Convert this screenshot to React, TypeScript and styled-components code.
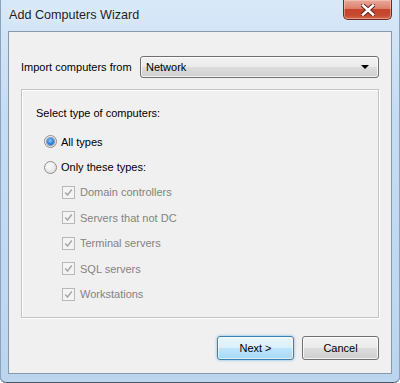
import React from "react";
import styled, { createGlobalStyle, css } from "styled-components";

const GlobalStyle = createGlobalStyle`
  html, body {
    margin: 0;
    padding: 0;
    width: 400px;
    height: 383px;
    overflow: hidden;
    background: #ffffff;
  }
  * {
    box-sizing: border-box;
  }
`;

const uiFont = `"Liberation Sans", Arial, sans-serif`;

const Window = styled.div`
  width: 400px;
  height: 383px;
  display: flex;
  flex-direction: column;
  padding: 0 8px 9px 8px;
  background: linear-gradient(180deg, #d7e8f8 0%, #c6dcf2 30%, #bcd5ee 100%);
  box-shadow: inset 1px 0 0 #8aa4bf, inset -1px 0 0 #8aa4bf, inset 0 -1px 0 #4a5868;
  border-bottom-left-radius: 6px;
  border-bottom-right-radius: 6px;
  font-family: ${uiFont};
  font-size: 11px;
`;

const TitleBar = styled.div`
  height: 31px;
  flex-shrink: 0;
  display: flex;
  align-items: flex-start;
  justify-content: space-between;
`;

const Title = styled.div`
  padding-top: 8px;
  padding-left: 1px;
  font-size: 12.6px;
  color: #1e1e1e;
  text-shadow: 0 0 8px rgba(255, 255, 255, 0.9);
`;

const CloseButton = styled.div`
  width: 49px;
  height: 20px;
  display: flex;
  align-items: center;
  justify-content: center;
  border: 1px solid #6b2a20;
  border-top: none;
  border-radius: 0 0 5px 5px;
  background: linear-gradient(180deg, #e9a99a 0%, #dd7f6c 45%, #c8442c 50%, #c6492f 80%, #d66a4c 100%);
  box-shadow: inset 0 0 0 1px rgba(255, 220, 210, 0.45);
`;

const Client = styled.div`
  flex: 1;
  display: flex;
  flex-direction: column;
  background: #f0f0f0;
  border: 1px solid #8799ad;
  padding: 24px 12px 13px 12px;
`;

const ImportRow = styled.div`
  display: flex;
  align-items: center;
  justify-content: space-between;
  height: 22px;
`;

const Label = styled.span<{ $disabled?: boolean }>`
  color: ${({ $disabled }) => ($disabled ? "#838383" : "#000000")};
  white-space: nowrap;
  line-height: 16px;
`;

const winButtonFace = css`
  border: 1px solid #707070;
  border-radius: 3px;
  background: linear-gradient(180deg, #f2f2f2 0%, #ebebeb 49%, #dddddd 50%, #cfcfcf 100%);
  box-shadow: inset 0 0 0 1px rgba(255, 255, 255, 0.75);
`;

const Combo = styled.div`
  ${winButtonFace};
  width: 239px;
  height: 22px;
  display: flex;
  align-items: center;
  justify-content: space-between;
  padding: 0 9px 0 5px;
  color: #000;
`;

const ComboArrow = styled.span`
  width: 0;
  height: 0;
  border-left: 4px solid transparent;
  border-right: 4px solid transparent;
  border-top: 4px solid #000;
`;

const GroupBox = styled.div`
  margin-top: 11px;
  height: 229px;
  border: 1px solid #c3c3c3;
  box-shadow: 1px 1px 0 #ffffff, inset 1px 1px 0 #ffffff;
  padding: 15px 14px 0 14px;
  display: flex;
  flex-direction: column;
`;

const OptionList = styled.div`
  margin-top: 8px;
  display: flex;
  flex-direction: column;
`;

const OptionRow = styled.div<{ $indent: number }>`
  height: 25.4px;
  display: flex;
  align-items: center;
  gap: 4px;
  padding-left: ${({ $indent }) => $indent}px;
`;

const Radio = styled.span<{ $checked?: boolean }>`
  width: 13px;
  height: 13px;
  border-radius: 50%;
  flex-shrink: 0;
  border: 1px solid #8e8f8f;
  background: radial-gradient(circle at 40% 35%, #ffffff 0%, #e6e6e6 60%, #cfcfcf 100%);
  display: flex;
  align-items: center;
  justify-content: center;

  ${({ $checked }) =>
    $checked &&
    css`
      &::after {
        content: "";
        width: 7px;
        height: 7px;
        border-radius: 50%;
        background: radial-gradient(circle at 45% 40%, #8fd0ff 0%, #2b7dd6 55%, #154f9e 100%);
        box-shadow: 0 0 0 1px rgba(22, 70, 140, 0.5);
      }
    `}
`;

const CheckBox = styled.span`
  width: 13px;
  height: 13px;
  flex-shrink: 0;
  border: 1px solid #b8b8b8;
  background: #f4f4f4;
  display: flex;
  align-items: center;
  justify-content: center;
  margin-right: 1px;
`;

const ButtonRow = styled.div`
  margin-top: 18px;
  display: flex;
  justify-content: flex-end;
  gap: 8px;
`;

const Button = styled.div<{ $default?: boolean }>`
  ${winButtonFace};
  width: 77px;
  height: 24px;
  display: flex;
  align-items: center;
  justify-content: center;
  color: #000;

  ${({ $default }) =>
    $default &&
    css`
      border-color: #3c7fb1;
      background: linear-gradient(180deg, #eaf6fd 0%, #d9f0fc 49%, #bee6fd 50%, #a7d9f5 100%);
      box-shadow: inset 0 0 0 1px rgba(255, 255, 255, 0.6), 0 0 3px rgba(60, 160, 230, 0.7);
    `}
`;

const CloseGlyph = () => (
  <svg width="14" height="12" viewBox="0 0 14 12">
    <path d="M2 1.5 L12 10.5 M12 1.5 L2 10.5" stroke="#5a1f18" strokeWidth="4.4" strokeLinecap="square" />
    <path d="M2 1.5 L12 10.5 M12 1.5 L2 10.5" stroke="#ffffff" strokeWidth="2.6" strokeLinecap="square" />
  </svg>
);

const CheckMark = () => (
  <svg width="9" height="9" viewBox="0 0 9 9">
    <path d="M1.2 4.6 L3.5 7 L7.8 1.5" fill="none" stroke="#a8a8a8" strokeWidth="1.5" />
  </svg>
);

const types = ["Domain controllers", "Servers that not DC", "Terminal servers", "SQL servers", "Workstations"];

export default function App() {
  return (
    <>
      <GlobalStyle />
      <Window>
        <TitleBar>
          <Title>Add Computers Wizard</Title>
          <CloseButton>
            <CloseGlyph />
          </CloseButton>
        </TitleBar>
        <Client>
          <ImportRow>
            <Label>Import computers from</Label>
            <Combo>
              <span>Network</span>
              <ComboArrow />
            </Combo>
          </ImportRow>
          <GroupBox>
            <Label>Select type of computers:</Label>
            <OptionList>
              <OptionRow $indent={8}>
                <Radio $checked />
                <Label>All types</Label>
              </OptionRow>
              <OptionRow $indent={8}>
                <Radio />
                <Label>Only these types:</Label>
              </OptionRow>
              {types.map((t) => (
                <OptionRow key={t} $indent={26}>
                  <CheckBox>
                    <CheckMark />
                  </CheckBox>
                  <Label $disabled>{t}</Label>
                </OptionRow>
              ))}
            </OptionList>
          </GroupBox>
          <ButtonRow>
            <Button $default>Next &gt;</Button>
            <Button>Cancel</Button>
          </ButtonRow>
        </Client>
      </Window>
    </>
  );
}
